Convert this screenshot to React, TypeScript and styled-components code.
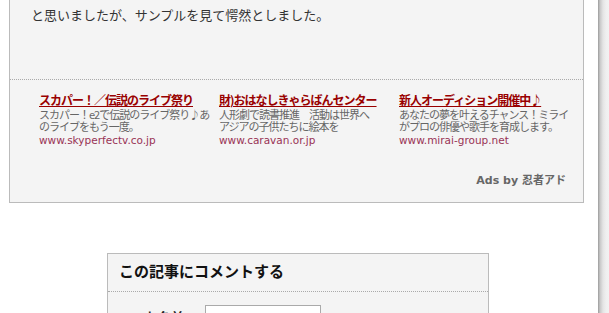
import styled, { createGlobalStyle } from "styled-components";

const GlobalStyle = createGlobalStyle`
  html, body {
    margin: 0;
    padding: 0;
    background: #fff;
    overflow: hidden;
  }
  body {
    font-family: "Noto Sans CJK JP", "Noto Sans", sans-serif;
  }
`;

type Ad = {
  title: string;
  lines: string[];
  url: string;
};

const ADS: Ad[] = [
  {
    title: "スカパー！／伝説のライブ祭り",
    lines: ["スカパー！e2で伝説のライブ祭り♪あ", "のライブをもう一度。"],
    url: "www.skyperfectv.co.jp",
  },
  {
    title: "財)おはなしきゃらばんセンター",
    lines: ["人形劇で読書推進　活動は世界へ", "アジアの子供たちに絵本を"],
    url: "www.caravan.or.jp",
  },
  {
    title: "新人オーディション開催中♪",
    lines: ["あなたの夢を叶えるチャンス！ミライ", "がプロの俳優や歌手を育成します。"],
    url: "www.mirai-group.net",
  },
];

function App() {
  return (
    <Page>
      <GlobalStyle />
      <Main>
        <ArticleBox>
          <BodyText>と思いましたが、サンプルを見て愕然としました。</BodyText>
          <AdArea>
            <AdRow>
              {ADS.map((ad) => (
                <AdItem key={ad.url}>
                  <AdTitle href="#">{ad.title}</AdTitle>
                  <AdDesc>
                    {ad.lines.map((line) => (
                      <div key={line}>{line}</div>
                    ))}
                  </AdDesc>
                  <AdUrl>{ad.url}</AdUrl>
                </AdItem>
              ))}
            </AdRow>
            <AdsBy>Ads by 忍者アド</AdsBy>
          </AdArea>
        </ArticleBox>

        <CommentBox>
          <CommentHead>この記事にコメントする</CommentHead>
          <FormRow>
            <FieldLabel>お名前</FieldLabel>
            <TextInput type="text" />
          </FormRow>
        </CommentBox>
      </Main>
      <EdgeShadow />
    </Page>
  );
}

const Page = styled.div`
  display: flex;
  width: 609px;
  height: 313px;
  overflow: hidden;
`;

const Main = styled.div`
  width: 598px;
  flex-shrink: 0;
`;

const EdgeShadow = styled.div`
  flex: 1;
  background: linear-gradient(to right, #9a9a9a 0px, #c8c8c8 2px, #e4e4e4 5px, #efefef 8px, #f2f2f2 11px);
`;

const ArticleBox = styled.div`
  margin-left: 9px;
  width: 573px;
  background: #f4f4f4;
  border: 1px solid #bbb;
  border-top: none;
`;

const BodyText = styled.p`
  margin: 0;
  padding: 5px 0 0 21px;
  height: 74px;
  font-size: 13px;
  line-height: 20px;
  color: #333;
`;

const AdArea = styled.div`
  border-top: 1px dotted #aaa;
  padding: 13px 17px 14px 29px;
`;

const AdRow = styled.div`
  display: flex;
`;

const AdItem = styled.div`
  width: 180px;
  flex-shrink: 0;
`;

const AdTitle = styled.a`
  display: block;
  width: fit-content;
  font-size: 12px;
  line-height: 14px;
  font-weight: bold;
  letter-spacing: -1px;
  color: #990000;
  text-decoration: underline;
  white-space: nowrap;
`;

const AdDesc = styled.div`
  font-size: 11px;
  line-height: 12px;
  letter-spacing: -1px;
  color: #666;
  white-space: nowrap;
  margin-top: 1px;
`;

const AdUrl = styled.div`
  font-family: "DejaVu Sans", Verdana, sans-serif;
  font-size: 10.5px;
  line-height: 16px;
  color: #993355;
`;

const AdsBy = styled.div`
  text-align: right;
  margin-top: 26px;
  font-family: "DejaVu Sans", "Noto Sans CJK JP", sans-serif;
  font-size: 11px;
  line-height: 14px;
  font-weight: bold;
  color: #666;
`;

const CommentBox = styled.div`
  margin: 50px 0 0 107px;
  width: 380px;
  background: #f4f4f4;
  border: 1px solid #bbb;
`;

const CommentHead = styled.div`
  padding: 7px 11px 10px;
  font-size: 15px;
  line-height: 20px;
  font-weight: bold;
  color: #111;
  border-bottom: 1px dotted #aaa;
`;

const FormRow = styled.div`
  display: flex;
  align-items: center;
  padding: 13px 0 0 37px;
`;

const FieldLabel = styled.span`
  width: 60px;
  font-size: 13px;
  font-weight: bold;
  color: #222;
`;

const TextInput = styled.input`
  width: 110px;
  height: 20px;
  border: 1px solid #aaa;
  background: #fff;
  padding: 0 2px;
`;

export default App;
